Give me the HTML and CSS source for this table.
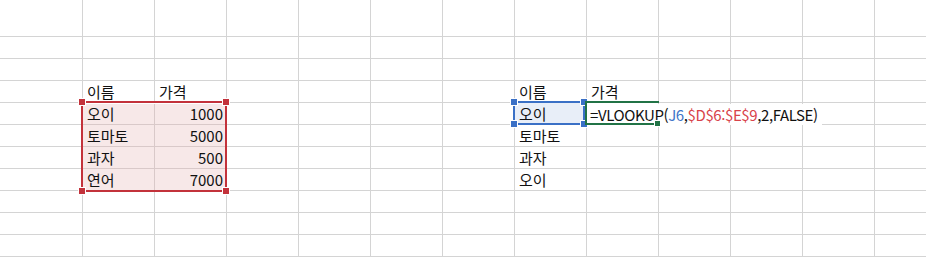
FILE: index.html
```html
<!DOCTYPE html>
<html lang="ko">
<head>
<meta charset="utf-8">
<title>Sheet</title>
<link rel="stylesheet" href="styles.css">
</head>
<body>
<div class="sheet">
  <div class="cell c2 r4">이름</div>
  <div class="cell c3 r4">가격</div>

  <div class="cell c2 r5 src">오이</div>
  <div class="cell c3 r5 src num">1000</div>
  <div class="cell c2 r6 src">토마토</div>
  <div class="cell c3 r6 src num">5000</div>
  <div class="cell c2 r7 src">과자</div>
  <div class="cell c3 r7 src num">500</div>
  <div class="cell c2 r8 src">연어</div>
  <div class="cell c3 r8 src num">7000</div>

  <div class="cell c8 r4">이름</div>
  <div class="cell c9 r4">가격</div>
  <div class="cell c8 r5 ref">오이</div>
  <div class="cell c8 r6">토마토</div>
  <div class="cell c8 r7">과자</div>
  <div class="cell c8 r8">오이</div>

  <div class="cell c9 r5 edit">=VLOOKUP(<span class="f-blue">J6</span>,<span class="f-red">$D$6:$E$9</span>,2,FALSE)</div>

  <div class="range range-red">
    <span class="handle tl"></span><span class="handle tr"></span>
    <span class="handle bl"></span><span class="handle br"></span>
  </div>
  <div class="range range-blue">
    <span class="handle tl"></span><span class="handle tr"></span>
    <span class="handle bl"></span><span class="handle br"></span>
  </div>
  <div class="active">
    <span class="fill-handle"></span>
  </div>
</div>
</body>
</html>
```

FILE: styles.css
```css
html, body {
  margin: 0;
  padding: 0;
  background: #fff;
  overflow: hidden;
}

.sheet {
  position: relative;
  width: 926px;
  height: 257px;
  overflow: hidden;
  display: grid;
  grid-template-columns: 11px repeat(13, 72px);
  grid-template-rows: 15px repeat(11, 22px);
  background-color: #fff;
  background-image:
    repeating-linear-gradient(to right, transparent 0 71px, #d4d4d4 71px 72px),
    repeating-linear-gradient(to bottom, transparent 0 21px, #d4d4d4 21px 22px);
  background-position: 11px 0, 0 15px;
  font-family: "Noto Sans CJK KR", "Noto Sans", sans-serif;
  font-size: 15px;
  color: #111;
}

.cell {
  box-sizing: border-box;
  height: 22px;
  padding: 0 4px 0 4px;
  line-height: 22px;
  white-space: nowrap;
}

.c2 { grid-column: 3; }
.c3 { grid-column: 4; }
.c8 { grid-column: 9; }
.c9 { grid-column: 10; }

.r4 { grid-row: 5; }
.r5 { grid-row: 6; }
.r6 { grid-row: 7; }
.r7 { grid-row: 8; }
.r8 { grid-row: 9; }

.num { text-align: right; padding-right: 3px; }

.src {
  background: #f7e8e8;
  border-right: 1px solid #d9c9c9;
  border-bottom: 1px solid #d9c9c9;
}

.ref {
  background: #e8eef8;
}

.edit {
  grid-column: 10 / span 4;
  justify-self: start;
  background: #fff;
  padding: 0 4px 0 3px;
  height: 21px;
  margin-top: 1px;
  line-height: 21px;
  letter-spacing: -0.4px;
  z-index: 1;
}

.f-blue { color: #3f76c9; }
.f-red { color: #d8434a; }

.range {
  position: absolute;
  box-sizing: border-box;
  border: 2px solid;
  z-index: 2;
}

.range-red {
  left: 81px;
  top: 101px;
  width: 146px;
  height: 91px;
  border-color: #c3323b;
  box-shadow: inset 0 1px 0 #fff;
}
.range-red .handle { background: #c3323b; }

.range-blue {
  left: 513px;
  top: 101px;
  width: 72px;
  height: 24px;
  border-color: #3a70c6;
}
.range-blue .handle { background: #3a70c6; }

.handle {
  position: absolute;
  width: 6px;
  height: 6px;
  border: 1px solid #fff;
  box-sizing: content-box;
}
.handle.tl { left: -5px; top: -5px; }
.handle.tr { right: -5px; top: -5px; }
.handle.bl { left: -5px; bottom: -5px; }
.handle.br { right: -5px; bottom: -5px; }

.active {
  position: absolute;
  left: 585px;
  top: 101px;
  width: 74px;
  height: 24px;
  box-sizing: border-box;
  border-top: 2px solid #217346;
  border-bottom: 2px solid #217346;
  border-left: 2px solid #217346;
  z-index: 3;
}

.fill-handle {
  position: absolute;
  right: -2px;
  bottom: -4px;
  width: 5px;
  height: 5px;
  background: #217346;
  border: 1px solid #fff;
}
```
